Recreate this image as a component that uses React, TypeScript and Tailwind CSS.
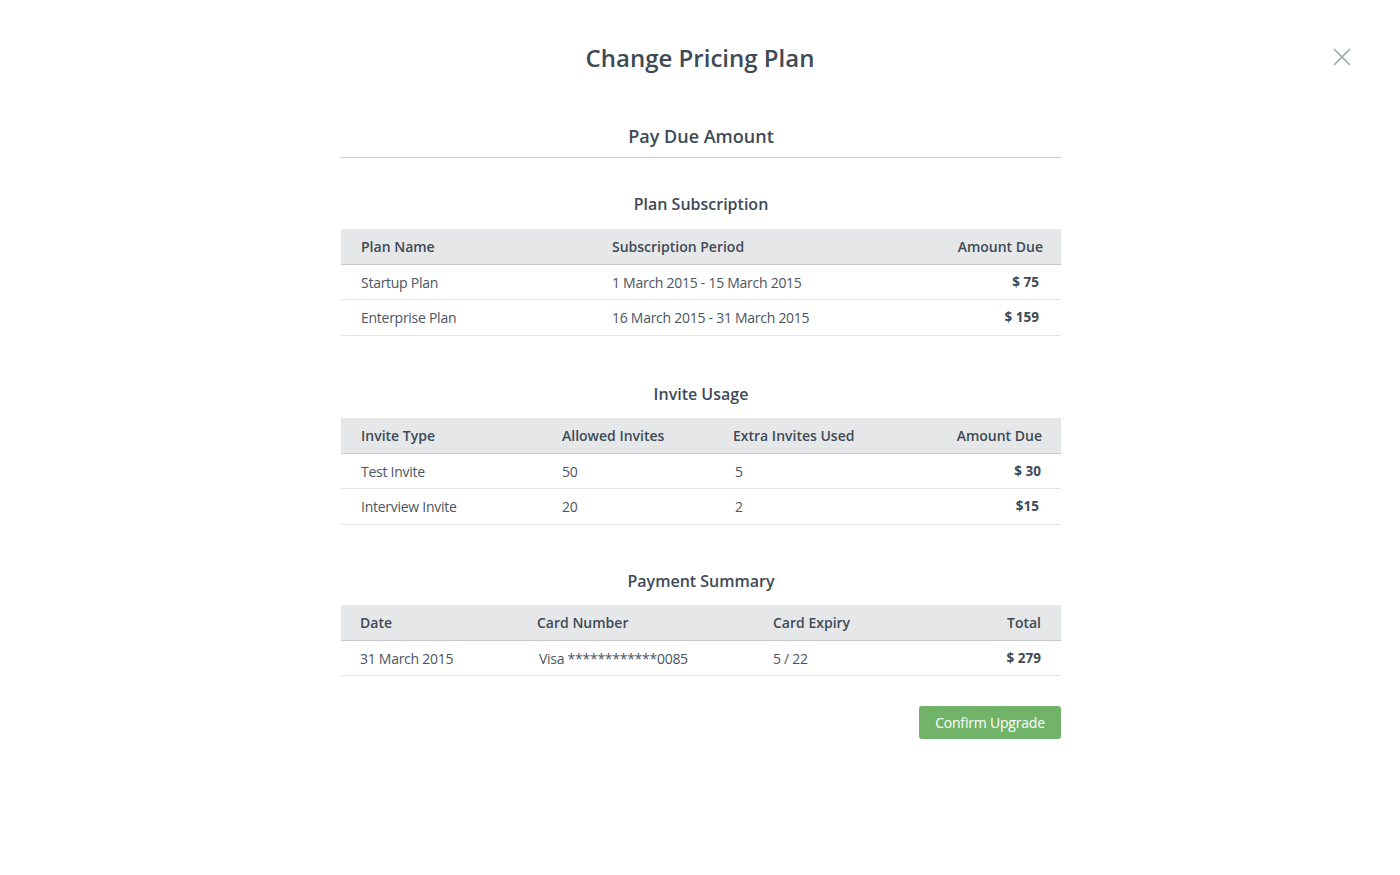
import React from "react";

const font = { fontFamily: '"Open Sans", "Noto Sans", sans-serif' };

const body = "text-[14px] tracking-[-0.27px] text-[#4b5560]";

function SectionTitle({ children, mt }: { children: React.ReactNode; mt: string }) {
  return (
    <div className={`${mt} mb-[13px] text-center text-[16px] leading-[22px] font-semibold text-[#3e4a56]`}>
      {children}
    </div>
  );
}

function HeadCell({ children, right }: { children: React.ReactNode; right?: boolean }) {
  return (
    <div className={`flex items-center px-5 text-[14px] font-semibold text-[#3e4a56] ${right ? "justify-end pr-[18px]" : ""}`}>
      {children}
    </div>
  );
}

function Cell({ children }: { children: React.ReactNode }) {
  return <div className={`flex items-center px-5 ${body}`}>{children}</div>;
}

function Amount({ children, pr }: { children: React.ReactNode; pr: string }) {
  return (
    <div className={`flex items-center justify-end ${pr} text-[13.5px] font-bold text-[#3e4a56]`}>{children}</div>
  );
}

export default function App() {
  return (
    <div style={font} className="relative min-h-[875px] w-full bg-white">
      <button className="absolute right-[49px] top-[48px] text-[#9ca3a9]" aria-label="close">
        <svg width="18" height="18" viewBox="0 0 18 18" fill="none" stroke="currentColor" strokeWidth="1.6">
          <path d="M1 1L17 17M17 1L1 17" />
        </svg>
      </button>

      <h1 className="pt-[41px] text-center text-[24px] leading-[34px] font-semibold text-[#3e4a56]">
        Change Pricing Plan
      </h1>

      <div className="mx-auto w-[722px] pl-[2px]">
        <div className="mt-[49px] border-b border-[#c9cbcd] pb-[9px] text-center text-[18px] leading-[24px] font-semibold text-[#3e4a56]">
          Pay Due Amount
        </div>

        <div className="mt-[35px] mb-[14px] text-center text-[16px] leading-[22px] font-semibold text-[#3e4a56]">
          Plan Subscription
        </div>
        <div>
          <div className="grid h-[36px] grid-cols-[251px_1fr_auto] border-b border-[#c6c9cd] bg-[#e6e7e9]">
            <HeadCell>Plan Name</HeadCell>
            <HeadCell>Subscription Period</HeadCell>
            <HeadCell right>Amount Due</HeadCell>
          </div>
          <div className="grid h-[35px] grid-cols-[251px_1fr_auto] border-b border-[#e4e5e7]">
            <Cell>Startup Plan</Cell>
            <Cell>1 March 2015 - 15 March 2015</Cell>
            <Amount pr="pr-[22px]">$ 75</Amount>
          </div>
          <div className="grid h-[36px] grid-cols-[251px_1fr_auto] border-b border-[#e4e5e7]">
            <Cell>Enterprise Plan</Cell>
            <Cell>16 March 2015 - 31 March 2015</Cell>
            <Amount pr="pr-[22px]">$ 159</Amount>
          </div>
        </div>

        <SectionTitle mt="mt-[47px]">Invite Usage</SectionTitle>
        <div>
          <div className="grid h-[36px] grid-cols-[201px_171px_1fr_auto] border-b border-[#c6c9cd] bg-[#e6e7e9]">
            <HeadCell>Invite Type</HeadCell>
            <HeadCell>Allowed Invites</HeadCell>
            <HeadCell>Extra Invites Used</HeadCell>
            <div className="flex items-center justify-end pr-[19px] text-[14px] font-semibold text-[#3e4a56]">Amount Due</div>
          </div>
          <div className="grid h-[35px] grid-cols-[201px_171px_1fr_auto] border-b border-[#e4e5e7]">
            <Cell>Test Invite</Cell>
            <Cell>50</Cell>
            <div className={`flex items-center pl-[22px] ${body}`}>5</div>
            <Amount pr="pr-[20px]">$ 30</Amount>
          </div>
          <div className="grid h-[36px] grid-cols-[201px_171px_1fr_auto] border-b border-[#e4e5e7]">
            <Cell>Interview Invite</Cell>
            <Cell>20</Cell>
            <div className={`flex items-center pl-[22px] ${body}`}>2</div>
            <Amount pr="pr-[22px]">$15</Amount>
          </div>
        </div>

        <SectionTitle mt="mt-[45px]">Payment Summary</SectionTitle>
        <div>
          <div className="grid h-[36px] grid-cols-[176px_236px_1fr_auto] border-b border-[#c6c9cd] bg-[#e6e7e9]">
            <div className="flex items-center pl-[19px] text-[14px] font-semibold text-[#3e4a56]">Date</div>
            <HeadCell>Card Number</HeadCell>
            <HeadCell>Card Expiry</HeadCell>
            <div className="flex items-center justify-end pr-[20px] text-[14px] font-semibold text-[#3e4a56]">Total</div>
          </div>
          <div className="grid h-[35px] grid-cols-[176px_236px_1fr_auto] border-b border-[#e4e5e7]">
            <div className={`flex items-center pl-[19px] ${body}`}>31 March 2015</div>
            <div className={`flex items-center pl-[22px] ${body}`}>Visa ************0085</div>
            <Cell>5 / 22</Cell>
            <Amount pr="pr-[20px]">$ 279</Amount>
          </div>
        </div>

        <div className="mt-[30px] flex justify-end">
          <button className="h-[33px] w-[142px] rounded-[3px] bg-[#72b36a] text-[14px] tracking-[-0.2px] text-white">
            Confirm Upgrade
          </button>
        </div>
      </div>
    </div>
  );
}
